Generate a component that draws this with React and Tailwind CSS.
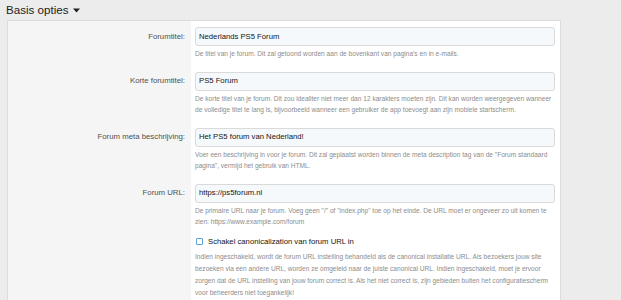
const font = { fontFamily: '"Liberation Sans", Arial, sans-serif' };

const Row = ({ label, value, first, children }) => (
    <div className="flex">
        <div className={`w-[183px] shrink-0 bg-[#f5f5f5] pr-[6px] ${first ? 'pt-[6px]' : 'pt-[12px]'}`}>
            <div className="h-[19px] flex items-center justify-end text-[7.8px] text-[#505050]">{label}</div>
        </div>
        <div className={`flex-1 bg-white pl-[4px] pr-[5px] ${first ? 'pt-[6px]' : 'pt-[12px]'}`}>
            <div className="h-[19px] flex items-center rounded-[3px] border border-[#dadada] bg-[#f5f9fc] pl-[3px] text-[7.7px] text-[#141414]">
                {value}
            </div>
            {children}
        </div>
    </div>
);

const Hint = ({ children, className = '' }) => (
    <p className={`mt-[2px] text-[6.6px] leading-[11.5px] text-[#8c8c8c] whitespace-nowrap ${className}`}>{children}</p>
);

const App = () => {
    return (
        <div className="w-[621px] h-[300px] overflow-hidden bg-[#ececec]" style={font}>
            {/* Header */}
            <div className="h-[20px] pl-[6px] flex items-center gap-[4px]">
                <span className="text-[11.6px] text-[#222]">Basis opties</span>
                <svg width="7" height="5" viewBox="0 0 7 5"><path d="M0 0.5h7L3.5 4.5z" fill="#222" /></svg>
            </div>

            {/* Card */}
            <div className="ml-[7px] w-[554px] border-l border-r border-t border-[#dcdcdc] bg-white">
                <Row label="Forumtitel:" value="Nederlands PS5 Forum" first>
                    <Hint>De titel van je forum. Dit zal getoond worden aan de bovenkant van pagina's en in e-mails.</Hint>
                </Row>

                <Row label="Korte forumtitel:" value="PS5 Forum">
                    <Hint>
                        De korte titel van je forum. Dit zou idealiter niet meer dan 12 karakters moeten zijn. Dit kan worden weergegeven wanneer<br />
                        de volledige titel te lang is, bijvoorbeeld wanneer een gebruiker de app toevoegt aan zijn mobiele startscherm.
                    </Hint>
                </Row>

                <Row label="Forum meta beschrijving:" value="Het PS5 forum van Nederland!">
                    <Hint>
                        Voer een beschrijving in voor je forum. Dit zal geplaatst worden binnen de meta description tag van de "Forum standaard<br />
                        pagina", vermijd het gebruik van HTML.
                    </Hint>
                </Row>

                <Row label="Forum URL:" value="https://ps5forum.nl">
                    <Hint>
                        De primaire URL naar je forum. Voeg geen "/" of "index.php" toe op het einde. De URL moet er ongeveer zo uit komen te<br />
                        zien: https://www.example.com/forum
                    </Hint>

                    {/* Canonical checkbox */}
                    <div className="mt-[9px] h-[10px] flex items-center gap-[5px] pl-[1px]">
                        <span className="w-[7px] h-[7px] border border-[#5fa3d6] rounded-[1px] bg-white" />
                        <span className="text-[7.7px] text-[#141414]">Schakel canonicalization van forum URL in</span>
                    </div>
                    <Hint className="mt-[4px] leading-[12px]">
                        Indien ingeschakeld, wordt de forum URL instelling behandeld als de canonical installatie URL. Als bezoekers jouw site<br />
                        bezoeken via een andere URL, worden ze omgeleid naar de juiste canonical URL. Indien ingeschakeld, moet je ervoor<br />
                        zorgen dat de URL instelling van jouw forum correct is. Als het niet correct is, zijn gebieden buiten het configuratiescherm<br />
                        voor beheerders niet toegankelijk!
                    </Hint>
                    <div className="h-[20px]" />
                </Row>
            </div>
        </div>
    );
};

export default App;
